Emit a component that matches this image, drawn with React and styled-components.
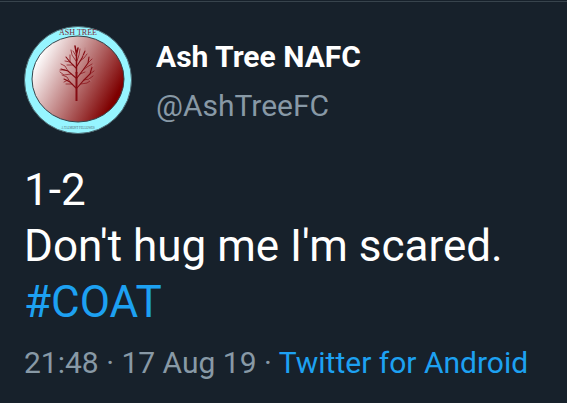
import React from 'react';
import styled, { createGlobalStyle } from 'styled-components';

const GlobalStyle = createGlobalStyle`
    html {
        background: #17212b;
    }
    body {
        margin: 0;
        font-family: Roboto, "Liberation Sans", sans-serif;
        color: #ffffff;
    }
`;
const Tweet = styled.article`
    margin-top: 1px;
    border-top: 1px solid #38444d;
    padding: 24px 24px 16px;
`;
const Header = styled.header`
    display: flex;
    align-items: center;
    gap: 24px;
`;
const AvatarImage = styled.svg`
    flex: none;
    width: 108px;
    height: 108px;
`;
const Names = styled.div`
    display: flex;
    flex-direction: column;
    padding-top: 2px;
    font-size: 30px;
    line-height: 49px;
`;
const Name = styled.strong`
    font-weight: 700;
`;
const Handle = styled.span`
    color: #8899a6;
`;
const TweetText = styled.p`
    margin: 28px 0 8px;
    font-size: 44px;
    line-height: 56px;
`;
const Meta = styled.footer`
    font-size: 30px;
    line-height: 49px;
    color: #8899a6;
`;
const Link = styled.a`
    color: #1da1f2;
    text-decoration: none;
`;

const Avatar = () => (
  <AvatarImage viewBox="0 0 108 108" role="img" aria-label="Ash Tree crest">
    <defs>
      <linearGradient id="disc" gradientUnits="userSpaceOnUse" x1="15" y1="29" x2="92" y2="70">
        <stop offset="0" stopColor="#ffffff" />
        <stop offset="1" stopColor="#7e0000" />
      </linearGradient>
    </defs>
    <circle cx="54" cy="54" r="53.5" fill="#96f5ff" stroke="#4d6870" strokeWidth="1" />
    <ellipse cx="54" cy="53" rx="46" ry="43" fill="url(#disc)" stroke="#34454c" strokeWidth="1" />
    <g fill="none" stroke="#850b12" strokeLinecap="round" transform="translate(-1 -2)">
      <path d="M53.5 77V48" strokeWidth="2" strokeLinecap="butt" />
      <path d="M53.5 49V30L52 22M53.5 30L55 24" strokeWidth="1.5" />
      <path d="M53 64L47 58L41 55M53 54L45 47L38 45M53 44L47 38L43 33M54 64L61 56L67 50L69 43M54 54L60 46L65 39L66 33M54 42L59 34L62 27" strokeWidth="1.1" />
      <path d="M49 60L43 60M47 58L44 53L39 51M45 56L41 58M48 50L41 51L37 48M45 47L42 42L38 40M42 46L37 46M50 41L44 41M47 38L42 37M47 38L47 31M53 37L49 31L48 26M53 32L50 27M54 37L56 31L57 25M57 37L61 34L64 30M60 46L64 43L69 40M57 50L62 48M61 56L66 55L70 52M58 60L64 59L67 57M65 39L69 35M67 50L71 47" strokeWidth="0.7" />
      <path d="M62 27L62 24M59 32L62 31M69 43L71 41M66 55L68 57M64 45L66 48" stroke="#b9757b" strokeWidth="0.6" />
    </g>
    <text x="54" y="9" textAnchor="middle" fontFamily="Liberation Serif, serif" fontSize="8" fill="#7b2a35">ASH TREE</text>
    <text x="54" y="103" textAnchor="middle" fontFamily="Liberation Serif, serif" fontSize="3" fill="#52666e">A TALMONT FELLOWES</text>
  </AvatarImage>
);

const App = () => {
  return (
    <>
      <GlobalStyle />
      <Tweet>
        <Header>
          <Avatar />
          <Names>
            <Name>Ash Tree NAFC</Name>
            <Handle>@AshTreeFC</Handle>
          </Names>
        </Header>
        <TweetText>
          1-2<br />
          Don't hug me I'm scared.<br />
          <Link href="#COAT">#COAT</Link>
        </TweetText>
        <Meta>
          21:48 · 17 Aug 19 · <Link href="#source">Twitter for Android</Link>
        </Meta>
      </Tweet>
    </>
  );
}

export default App;
